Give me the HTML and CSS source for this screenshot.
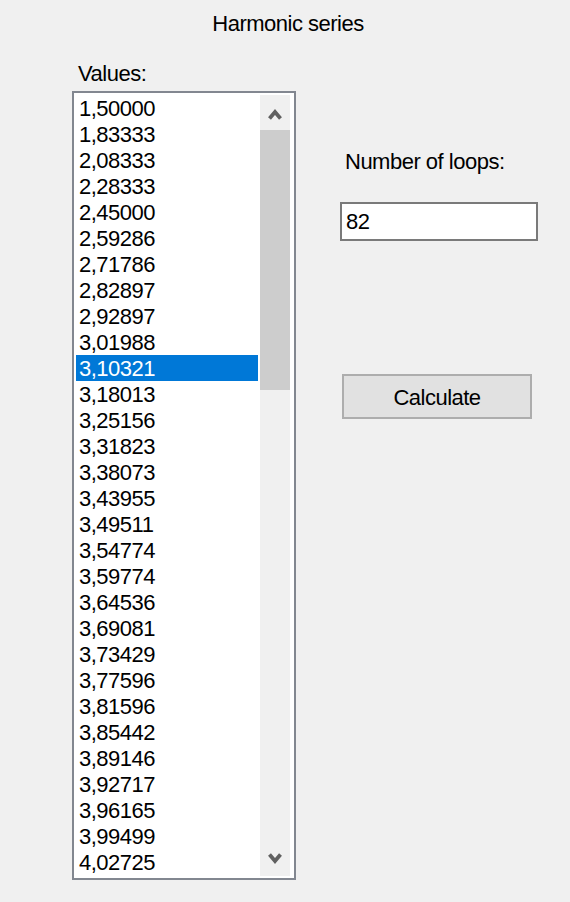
FILE: index.html
```html
<!DOCTYPE html>
<html lang="en">
<head>
<meta charset="utf-8">
<title>Harmonic series</title>
<link rel="stylesheet" href="styles.css">
</head>
<body>
<div class="window">
  <div class="title">Harmonic series</div>
  <div class="main">
    <div class="left">
      <div class="label values-label">Values:</div>
      <div class="listbox">
        <ul class="items">
          <li>1,50000</li>
          <li>1,83333</li>
          <li>2,08333</li>
          <li>2,28333</li>
          <li>2,45000</li>
          <li>2,59286</li>
          <li>2,71786</li>
          <li>2,82897</li>
          <li>2,92897</li>
          <li>3,01988</li>
          <li class="selected">3,10321</li>
          <li>3,18013</li>
          <li>3,25156</li>
          <li>3,31823</li>
          <li>3,38073</li>
          <li>3,43955</li>
          <li>3,49511</li>
          <li>3,54774</li>
          <li>3,59774</li>
          <li>3,64536</li>
          <li>3,69081</li>
          <li>3,73429</li>
          <li>3,77596</li>
          <li>3,81596</li>
          <li>3,85442</li>
          <li>3,89146</li>
          <li>3,92717</li>
          <li>3,96165</li>
          <li>3,99499</li>
          <li>4,02725</li>
        </ul>
        <div class="scrollbar">
          <div class="sb-btn sb-up">
            <svg width="14" height="12" viewBox="0 0 14 12"><polyline points="1.5,10.5 7,4 12.5,10.5" fill="none" stroke="#606060" stroke-width="3.8" stroke-linejoin="miter"/></svg>
          </div>
          <div class="sb-track">
            <div class="sb-thumb"></div>
          </div>
          <div class="sb-btn sb-down">
            <svg width="14" height="12" viewBox="0 0 14 12"><polyline points="1.5,1.5 7,8 12.5,1.5" fill="none" stroke="#606060" stroke-width="3.8" stroke-linejoin="miter"/></svg>
          </div>
        </div>
      </div>
    </div>
    <div class="right">
      <div class="label loops-label">Number of loops:</div>
      <div class="textbox">82</div>
      <div class="button">Calculate</div>
    </div>
  </div>
</div>
</body>
</html>
```

FILE: styles.css
```css
html, body {
  margin: 0;
  padding: 0;
  background: #f0f0f0;
}

body {
  font-family: "Liberation Sans", Arial, sans-serif;
  font-size: 22px;
  letter-spacing: -0.5px;
  line-height: 24px;
  color: #000;
}

.window {
  width: 570px;
  height: 902px;
  padding-top: 12px;
  box-sizing: border-box;
  overflow: hidden;
}

.title {
  text-align: center;
  padding-left: 6px;
  height: 24px;
}

.main {
  display: flex;
  margin-top: 26px;
  padding-left: 72px;
}

.left {
  display: flex;
  flex-direction: column;
}

.label {
  height: 24px;
  white-space: nowrap;
}

.values-label {
  padding-left: 6px;
}

.listbox {
  margin-top: 5px;
  width: 224px;
  height: 789px;
  box-sizing: border-box;
  border: 2px solid #828790;
  background: #fff;
  padding: 2px;
  display: flex;
  gap: 2px;
}

.items {
  list-style: none;
  margin: 0;
  padding: 0;
  width: 182px;
  overflow: hidden;
}

.items li {
  height: 26px;
  box-sizing: border-box;
  padding: 2px 0 0 3px;
  line-height: 24px;
}

.items li.selected {
  background: #0078d7;
  color: #fff;
}

.scrollbar {
  width: 30px;
  display: flex;
  flex-direction: column;
  background: #f0f0f0;
}

.sb-btn {
  height: 34px;
  display: flex;
  align-items: center;
  justify-content: center;
  flex: none;
}

.sb-btn svg {
  display: block;
}

.sb-up svg {
  margin-top: 4px;
}

.sb-track {
  flex: 1;
  padding-top: 1px;
}

.sb-thumb {
  height: 260px;
  background: #cdcdcd;
}

.right {
  margin-left: 44px;
  padding-top: 88px;
  display: flex;
  flex-direction: column;
  align-items: flex-start;
}

.loops-label {
  padding-left: 5px;
}

.textbox {
  margin-top: 28px;
  width: 198px;
  height: 39px;
  box-sizing: border-box;
  border: 2px solid #7a7a7a;
  background: #fff;
  padding: 0 0 0 4px;
  display: flex;
  align-items: center;
}

.button {
  margin-top: 133px;
  margin-left: 2px;
  width: 190px;
  height: 45px;
  box-sizing: border-box;
  border: 2px solid #adadad;
  background: #e1e1e1;
  display: flex;
  align-items: center;
  justify-content: center;
  padding-top: 2px;
}
```
